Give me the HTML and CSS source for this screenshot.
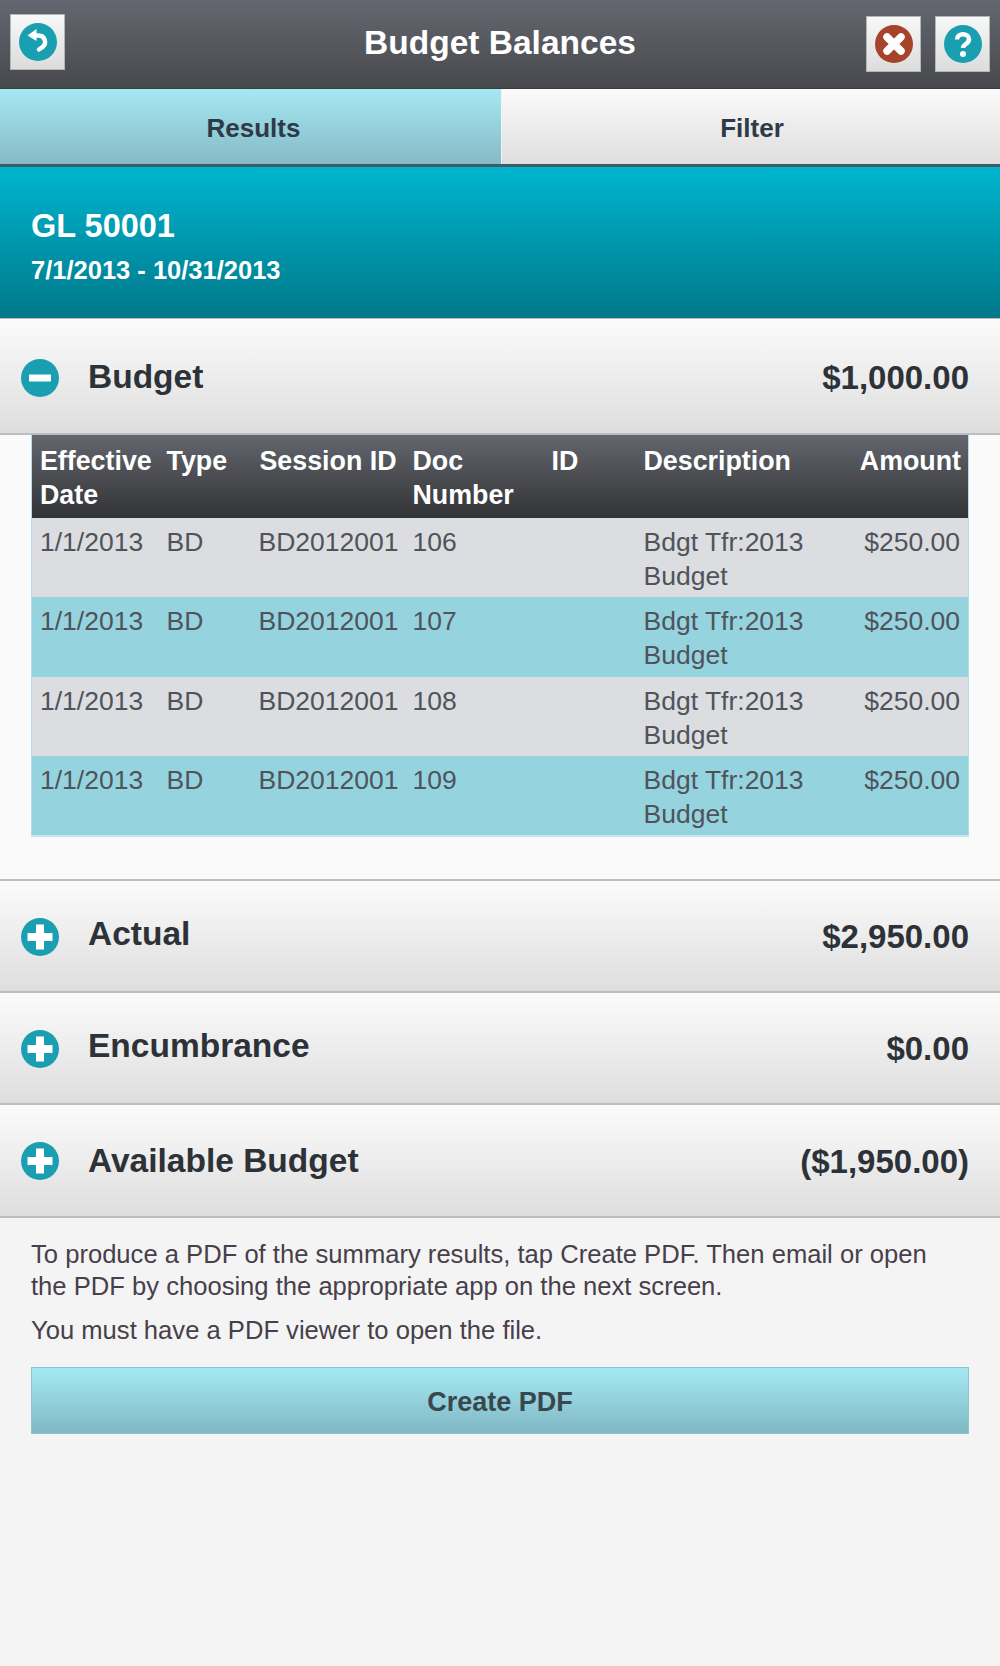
FILE: index.html
```html
<!DOCTYPE html>
<html>
<head>
    <meta charset="utf-8">
    <title>Budget Balances</title>
    <link rel="stylesheet" href="styles.css">
</head>
<body>
<div class="header">
    <a class="hbtn back-btn">
        <svg width="38" height="38" viewBox="0 0 38 38">
            <circle cx="19" cy="19" r="19" fill="#1a9fb1"/>
            <path d="M16 12.5h3.5a6.5 6.5 0 0 1 3.500 12l-3 2" fill="none" stroke="#fff" stroke-width="4.500" stroke-linecap="round"/>
            <path d="M8.500 12.500l9-6.500v12z" fill="#fff"/>
        </svg>
    </a>
    <h1 class="title">Budget Balances</h1>
    <div class="hbtn-group">
        <a class="hbtn">
            <svg width="38" height="38" viewBox="0 0 38 38">
                <circle cx="19" cy="19" r="19" fill="#a5432b"/>
                <path d="M12 12l14 14M26 12l-14 14" stroke="#fff" stroke-width="7.500" stroke-linecap="round"/>
            </svg>
        </a>
        <a class="hbtn">
            <svg width="38" height="38" viewBox="0 0 38 38">
                <circle cx="19" cy="19" r="19" fill="#1a9fb1"/>
                <path d="M13 14.500c0-7 12-7 12 0 0 4.500-6 4.500-6 8.500" fill="none" stroke="#fff" stroke-width="4.500"/>
                <circle cx="19" cy="29" r="3" fill="#fff"/>
            </svg>
        </a>
    </div>
</div>

<div class="tabs">
    <a class="tab active">Results</a>
    <a class="tab">Filter</a>
</div>

<div class="banner">
    <div class="gl">GL 50001</div>
    <div class="dates">7/1/2013 - 10/31/2013</div>
</div>

<div class="section-head first">
    <svg class="toggle" width="38" height="38" viewBox="0 0 38 38">
        <circle cx="19" cy="19" r="19" fill="#1a9fb1"/>
        <rect x="8" y="15.500" width="22" height="7" fill="#fff"/>
    </svg>
    <span class="section-name">Budget</span>
    <span class="section-amt">$1,000.00</span>
</div>
<div class="panel">
    <table class="detail">
        <colgroup>
            <col class="c-date"><col class="c-type"><col class="c-session"><col class="c-doc"><col class="c-id"><col class="c-desc"><col class="c-amt">
        </colgroup>
        <thead>
        <tr>
            <th>Effective Date</th>
            <th>Type</th>
            <th class="center">Session ID</th>
            <th>Doc Number</th>
            <th>ID</th>
            <th>Description</th>
            <th class="right">Amount</th>
        </tr>
        </thead>
        <tbody>
        <tr>
            <td>1/1/2013</td><td>BD</td><td class="center">BD2012001</td><td>106</td><td></td><td>Bdgt Tfr:2013 Budget</td><td class="right">$250.00</td>
        </tr>
        <tr>
            <td>1/1/2013</td><td>BD</td><td class="center">BD2012001</td><td>107</td><td></td><td>Bdgt Tfr:2013 Budget</td><td class="right">$250.00</td>
        </tr>
        <tr>
            <td>1/1/2013</td><td>BD</td><td class="center">BD2012001</td><td>108</td><td></td><td>Bdgt Tfr:2013 Budget</td><td class="right">$250.00</td>
        </tr>
        <tr>
            <td>1/1/2013</td><td>BD</td><td class="center">BD2012001</td><td>109</td><td></td><td>Bdgt Tfr:2013 Budget</td><td class="right">$250.00</td>
        </tr>
        </tbody>
    </table>
</div>

<div class="section-head">
    <svg class="toggle" width="38" height="38" viewBox="0 0 38 38">
        <circle cx="19" cy="19" r="19" fill="#1a9fb1"/>
        <path d="M19 6.500v25M6.500 19h25" stroke="#fff" stroke-width="8"/>
    </svg>
    <span class="section-name raised">Actual</span>
    <span class="section-amt">$2,950.00</span>
</div>
<div class="section-head">
    <svg class="toggle" width="38" height="38" viewBox="0 0 38 38">
        <circle cx="19" cy="19" r="19" fill="#1a9fb1"/>
        <path d="M19 6.500v25M6.500 19h25" stroke="#fff" stroke-width="8"/>
    </svg>
    <span class="section-name raised">Encumbrance</span>
    <span class="section-amt">$0.00</span>
</div>
<div class="section-head">
    <svg class="toggle" width="38" height="38" viewBox="0 0 38 38">
        <circle cx="19" cy="19" r="19" fill="#1a9fb1"/>
        <path d="M19 6.500v25M6.500 19h25" stroke="#fff" stroke-width="8"/>
    </svg>
    <span class="section-name">Available Budget</span>
    <span class="section-amt">($1,950.00)</span>
</div>

<div class="pdf">
    <p>To produce a PDF of the summary results, tap Create PDF. Then email or open the PDF by choosing the appropriate app on the next screen.</p>
    <p>You must have a PDF viewer to open the file.</p>
    <a class="pdf-btn">Create PDF</a>
</div>
</body>
</html>
```

FILE: styles.css
```css
html, body {
    margin: 0;
    padding: 0;
}

body {
    min-height: 1666px;
    background-color: #f4f4f4;
    font-family: "Liberation Sans", Arial, sans-serif;
    color: #2c3238;
}

/* top bar */
.header {
    height: 89px;
    box-sizing: border-box;
    border-bottom: 1px solid #3a3c40;
    background: linear-gradient(#64676f, #47494d);
    display: flex;
    align-items: center;
    justify-content: space-between;
    padding: 0 10px;
    position: relative;
}

.title {
    position: absolute;
    left: 0;
    right: 0;
    top: 22px;
    margin: 0;
    text-align: center;
    font-size: 33.500px;
    line-height: 42px;
    color: #fff;
    pointer-events: none;
}

.hbtn {
    width: 55px;
    height: 56px;
    box-sizing: border-box;
    display: flex;
    align-items: center;
    justify-content: center;
    background: linear-gradient(#f8f8f8, #dcdcdc);
    border: 1px solid #b4b6b8;
}

.back-btn {
    margin-bottom: 5px;
}

.hbtn-group {
    display: flex;
    gap: 14px;
    margin-top: -1px;
}

/* tabs */
.tabs {
    height: 78px;
    box-sizing: border-box;
    display: flex;
    gap: 1px;
    border-bottom: 3px solid #3f5c66;
}

.tab {
    flex: 1;
    display: flex;
    align-items: center;
    justify-content: center;
    padding: 3px 0 0 2px;
    font-size: 26px;
    font-weight: bold;
    color: #2f3a48;
    background: linear-gradient(#fafafa, #dedede);
}

.tab.active {
    flex: 0 0 501px;
    box-sizing: border-box;
    padding-left: 6px;
    background: linear-gradient(#a5e9f4, #85b9c5);
}

/* GL banner */
.banner {
    height: 152px;
    box-sizing: border-box;
    padding: 39px 31px 0;
    color: #fff;
    font-weight: bold;
    background: linear-gradient(#00b5cf, #00788a);
    border-bottom: 1px solid #b9b9b9;
}

.gl {
    font-size: 32.500px;
    line-height: 40px;
}

.dates {
    margin-top: 8px;
    font-size: 25.500px;
    line-height: 32px;
}

/* collapsible sections */
.section-head {
    height: 112.300px;
    box-sizing: border-box;
    display: flex;
    align-items: center;
    padding: 0 31px 0 21px;
    border-bottom: 2px solid #bdbdbd;
    background: linear-gradient(#fbfbfb, #dedede);
}

.section-head.first {
    height: 116px;
    padding-top: 2px;
}

.toggle {
    flex: none;
    margin: 1px 29px 0 0;
}

.section-name {
    flex: 1;
    font-size: 33.500px;
    font-weight: bold;
    position: relative;
    top: 0;
}

.section-name.raised {
    top: -2px;
}

.section-amt {
    font-size: 33px;
    font-weight: bold;
    position: relative;
    top: 1px;
}

.panel {
    padding: 0 31px 42px;
    background-color: #fafafa;
    border-bottom: 2px solid #bdbdbd;
}

/* detail table */
.detail {
    width: 938px;
    table-layout: fixed;
    border-collapse: collapse;
    font-size: 26.500px;
    line-height: 34px;
    border-left: 1px solid #a6e0ea;
    border-right: 1px solid #a6e0ea;
    border-bottom: 2px solid #c4e6ec;
}

.c-date { width: 127px; }
.c-type { width: 92px; }
.c-session { width: 154px; }
.c-doc { width: 139px; }
.c-id { width: 92px; }
.c-desc { width: 180px; }

.detail th {
    padding: 9px 7px 6px 8px;
    text-align: left;
    vertical-align: top;
    color: #fff;
    font-size: 26.800px;
    font-weight: bold;
    background: linear-gradient(#63666e, #323335);
}

.detail td {
    height: 79.300px;
    box-sizing: border-box;
    padding: 7px 8px 4px;
    vertical-align: top;
    color: #50535a;
    background-color: #dcdde0;
}

.detail tbody tr:nth-child(even) td {
    background-color: #95d4df;
}

.detail .right {
    text-align: right;
}

.detail .center {
    text-align: center;
}

/* pdf box */
.pdf {
    padding: 20px 31px 0;
    font-size: 25.600px;
    line-height: 32px;
    color: #473f4a;
}

.pdf p {
    margin: 0 40px 12px 0;
}

.pdf-btn {
    display: block;
    height: 67px;
    margin-top: 21px;
    box-sizing: border-box;
    line-height: 69px;
    text-align: center;
    font-size: 27px;
    font-weight: bold;
    color: #39474f;
    background: linear-gradient(#a5e9f4, #80b8c4);
    border: 1px solid #8cc4cf;
}
```
